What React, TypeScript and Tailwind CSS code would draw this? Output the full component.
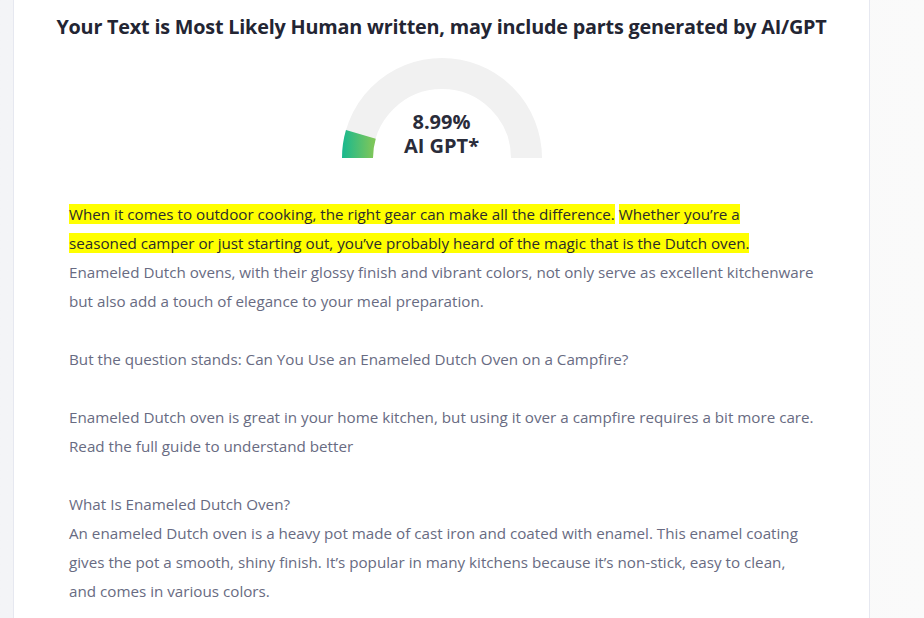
export default function App() {
  const body = "text-[15.2px] leading-[29px] text-[#686b82] whitespace-nowrap"
  const hl = "bg-[#ffff00] text-[#2b2b2b]"

  return (
    <div
      className="min-h-[618px] w-full bg-gradient-to-r from-[#f3f4f7] via-[#f6f7f9] to-[#fafafa] flex"
      style={{ fontFamily: '"Open Sans", "Noto Sans", Arial, sans-serif' }}
    >
      <div className="ml-[13px] w-[857px] h-[618px] overflow-hidden bg-white border-x border-[#e6e8f0]">
        {/* heading */}
        <h2 className="pt-[13px] text-center text-[19.8px] leading-[28px] font-bold text-[#232533] tracking-[-0.2px]">
          Your Text is Most Likely Human written, may include parts generated by AI/GPT
        </h2>

        {/* gauge */}
        <div className="mt-[17px] flex justify-center">
          <div className="relative w-[200px] h-[100px]">
            <svg width="200" height="100" viewBox="0 0 200 100">
              <defs>
                <linearGradient id="g" x1="0" y1="0" x2="31" y2="0" gradientUnits="userSpaceOnUse">
                  <stop offset="0" stopColor="#18b88f" />
                  <stop offset="1" stopColor="#7dc65a" />
                </linearGradient>
              </defs>
              <path d="M15.5 100 A84.5 84.5 0 0 1 184.5 100" fill="none" stroke="#f1f1f1" strokeWidth="31" />
              <path d="M15.5 100 A84.5 84.5 0 0 1 18.86 76.42" fill="none" stroke="url(#g)" strokeWidth="31" />
            </svg>
            <div className="absolute left-0 right-0 top-[52px] text-center text-[20px] leading-[24px] font-bold text-[#2a2c3a]">
              <div>8.99%</div>
              <div>AI GPT*</div>
            </div>
          </div>
        </div>

        {/* text */}
        <div className="mt-[42px] pl-[55px] pr-[20px]">
          <p className={body}>
            <span className={hl}>When it comes to outdoor cooking, the right gear can make all the difference.</span>{' '}
            <span className={hl}>
              Whether you’re a
              <br />
              seasoned camper or just starting out, you’ve probably heard of the magic that is the Dutch oven.
            </span>
            <br />
            Enameled Dutch ovens, with their glossy finish and vibrant colors, not only serve as excellent kitchenware
            <br />
            but also add a touch of elegance to your meal preparation.
          </p>
          <p className={`${body} mt-[29px]`}>
            But the question stands: Can You Use an Enameled Dutch Oven on a Campfire?
          </p>
          <p className={`${body} mt-[29px]`}>
            Enameled Dutch oven is great in your home kitchen, but using it over a campfire requires a bit more care.
            <br />
            Read the full guide to understand better
          </p>
          <p className={`${body} mt-[29px]`}>
            What Is Enameled Dutch Oven?
            <br />
            An enameled Dutch oven is a heavy pot made of cast iron and coated with enamel. This enamel coating
            <br />
            gives the pot a smooth, shiny finish. It’s popular in many kitchens because it’s non-stick, easy to clean,
            <br />
            and comes in various colors.
          </p>
        </div>
      </div>
    </div>
  )
}
